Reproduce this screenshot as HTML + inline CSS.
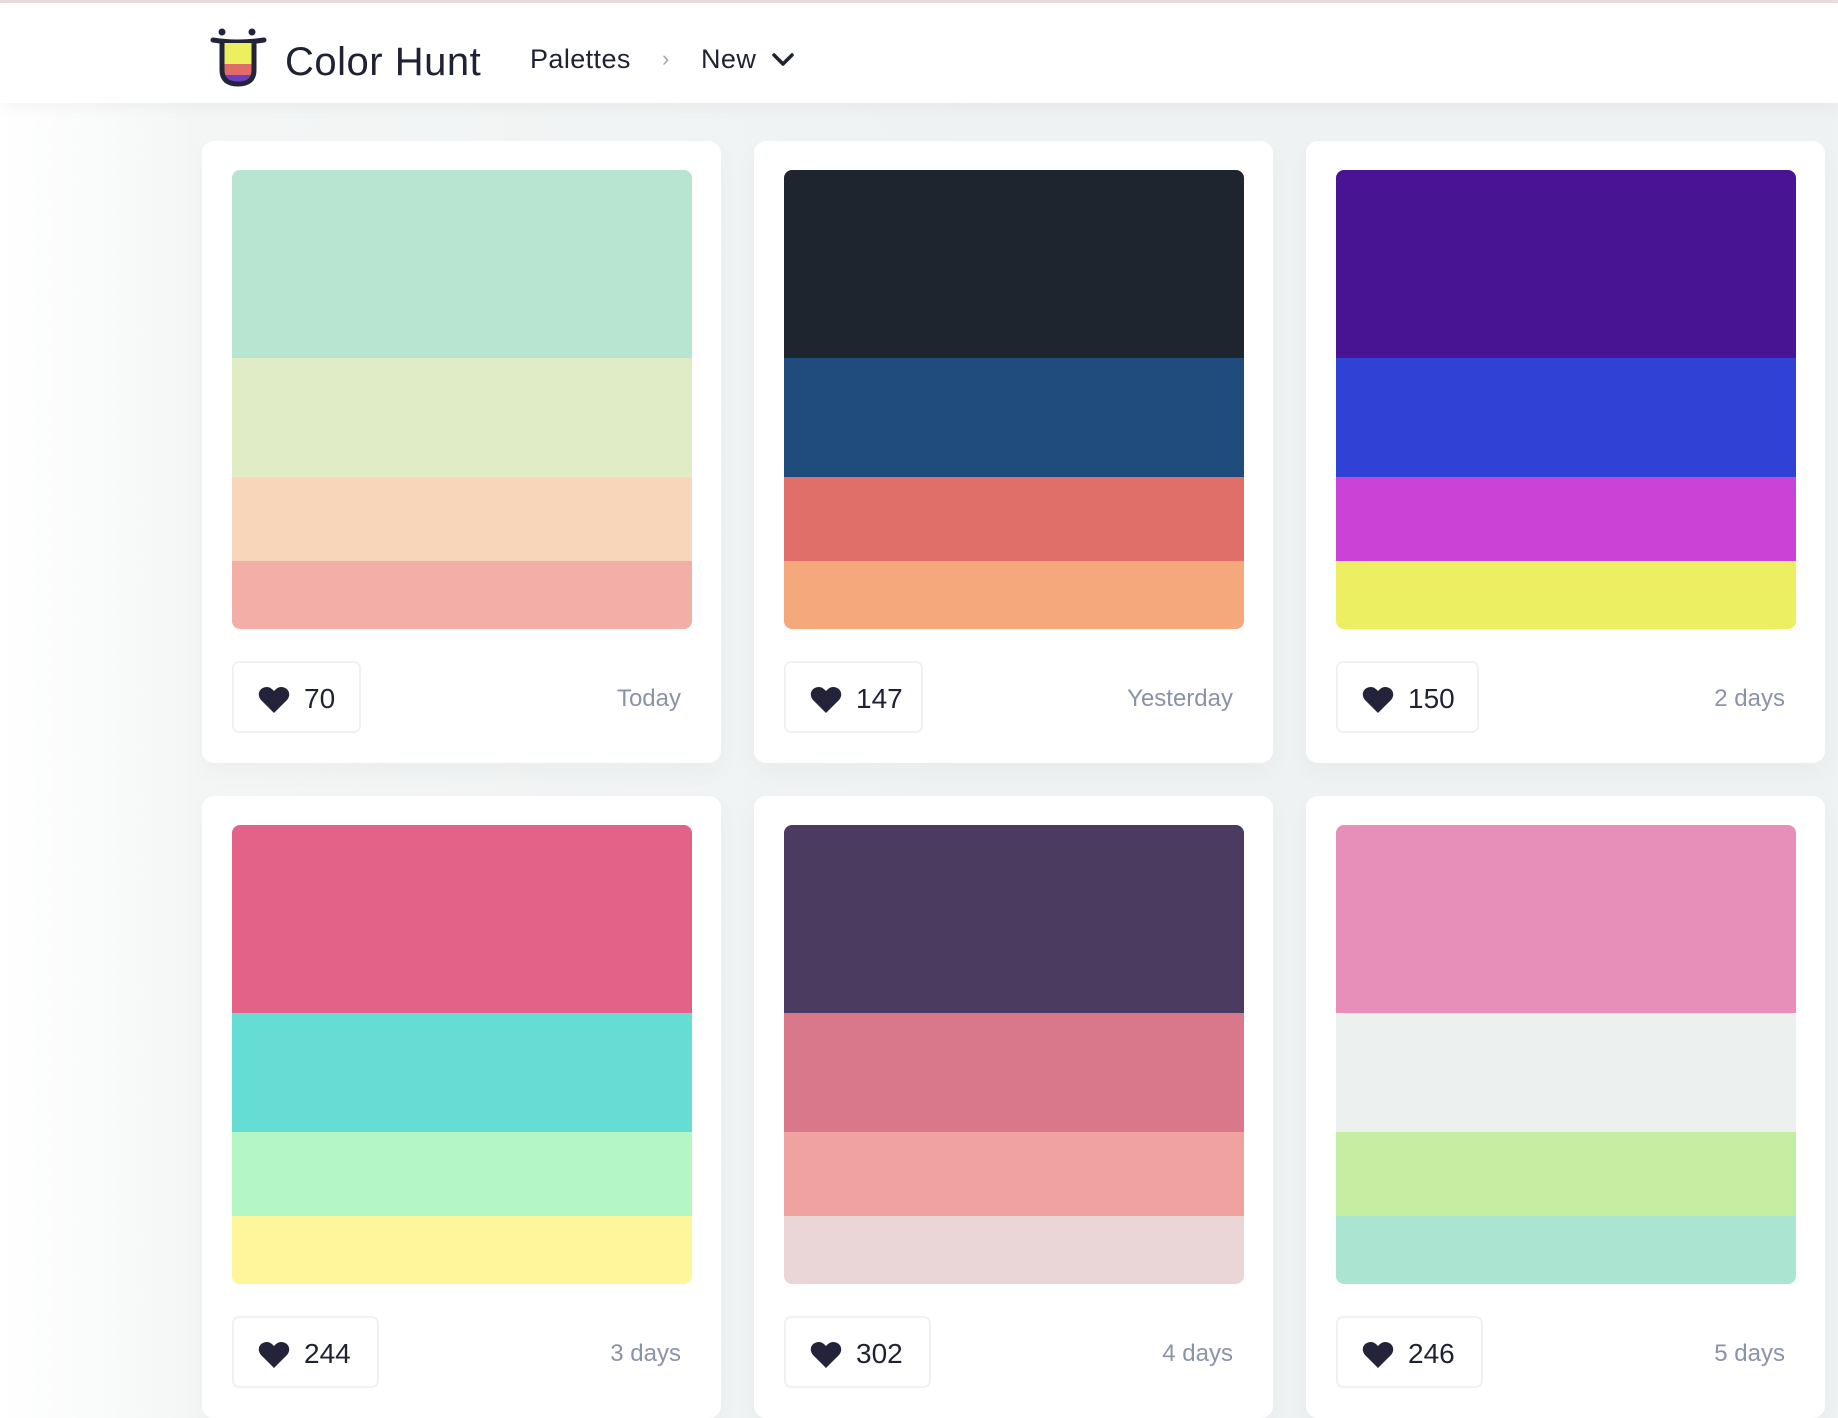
<!DOCTYPE html>
<html><head><meta charset="utf-8"><style>
*{margin:0;padding:0;box-sizing:border-box}
body{width:1838px;height:1382px;overflow:hidden;font-family:"Liberation Sans",sans-serif;background:linear-gradient(90deg,#fff 0,#f4f6f6 200px,#eef2f2 1000px,#eef2f2 100%);position:relative}
.top{position:absolute;left:0;top:0;width:1838px;height:3px;background:#e8dcdc}
.hdr{position:absolute;left:0;top:3px;width:1838px;height:100px;background:#fff;box-shadow:0 6px 14px rgba(0,0,0,0.04)}
.brand{position:absolute;left:285px;top:37px;font-size:40px;color:#1f2233;letter-spacing:0.5px}
.nav{position:absolute;top:41px;font-size:27px;color:#1f2233;letter-spacing:0.4px}
.card{position:absolute;width:519px;background:#fff;border-radius:12px;box-shadow:0 10px 24px rgba(0,0,0,0.03)}
.pal{position:absolute;left:30px;top:29px;width:460px;border-radius:8px;overflow:hidden}
.pal div{width:100%}
.like{position:absolute;left:30px;width:129px;height:72px;border:2px solid #eef2f2;border-radius:7px;font-size:28px;color:#1f2233}
.like svg{position:absolute;left:24px;top:23px}
.like span{position:absolute;left:70px;top:20px}
.date{position:absolute;right:40px;font-size:24px;color:#8a93a8}
</style></head><body>
<div class="top"></div>
<div class="hdr">
<svg style="position:absolute;left:200px;top:7px" width="80" height="80" viewBox="200 10 80 80">
<circle cx="222" cy="32" r="3.5" fill="#23243a"/><circle cx="252" cy="32" r="3.5" fill="#23243a"/>
<path d="M213 40 Q237 44 264 40" stroke="#23243a" stroke-width="5" fill="none" stroke-linecap="round"/>
<rect x="224" y="43" width="28" height="21" fill="#ecef5f"/>
<rect x="224" y="64" width="28" height="11" fill="#e06c6a"/>
<path d="M224 75 L252 75 Q250 83 238 83 Q226 83 224 75Z" fill="#6b3fbf"/>
<path d="M222 42 L222 70 Q222 84 238 84 Q254 84 254 70 L254 42" stroke="#23243a" stroke-width="5" fill="none"/>
</svg>
<div class="brand">Color Hunt</div>
<div class="nav" style="left:530px">Palettes</div>
<div class="nav" style="left:662px;color:#a0a7b5;font-size:22px;top:43px">›</div>
<div class="nav" style="left:701px">New</div>
<svg style="position:absolute;left:771px;top:49px" width="24" height="16" viewBox="0 0 24 16"><path d="M3 3 L12 12 L21 3" stroke="#1f2233" stroke-width="3.5" fill="none" stroke-linecap="round" stroke-linejoin="round"/></svg>
</div>

<div class="card" style="left:202px;top:141px;height:622px">
<div class="pal"><div style="height:188px;background:#b8e5d1"></div><div style="height:119px;background:#e0ecc5"></div><div style="height:84px;background:#f8d6ba"></div><div style="height:68px;background:#f3aea7"></div></div>
<div class="like" style="top:520px"><svg width="32" height="28" viewBox="0 0 32 28"><path d="M16 27 L3 14 C-2 8 2 1 9 1 C12 1 14 3 16 5 C18 3 20 1 23 1 C30 1 34 8 29 14Z" fill="#23243a"/></svg><span>70</span></div>
<div class="date" style="top:544px">Today</div>
</div>
<div class="card" style="left:754px;top:141px;height:622px">
<div class="pal"><div style="height:188px;background:#1e252f"></div><div style="height:119px;background:#204c7d"></div><div style="height:84px;background:#e06f69"></div><div style="height:68px;background:#f5a87b"></div></div>
<div class="like" style="top:520px;width:139px"><svg width="32" height="28" viewBox="0 0 32 28"><path d="M16 27 L3 14 C-2 8 2 1 9 1 C12 1 14 3 16 5 C18 3 20 1 23 1 C30 1 34 8 29 14Z" fill="#23243a"/></svg><span>147</span></div>
<div class="date" style="top:544px">Yesterday</div>
</div>
<div class="card" style="left:1306px;top:141px;height:622px">
<div class="pal"><div style="height:188px;background:#481493"></div><div style="height:119px;background:#3042d6"></div><div style="height:84px;background:#ca43d6"></div><div style="height:68px;background:#ecef62"></div></div>
<div class="like" style="top:520px;width:143px"><svg width="32" height="28" viewBox="0 0 32 28"><path d="M16 27 L3 14 C-2 8 2 1 9 1 C12 1 14 3 16 5 C18 3 20 1 23 1 C30 1 34 8 29 14Z" fill="#23243a"/></svg><span>150</span></div>
<div class="date" style="top:544px">2 days</div>
</div>

<div class="card" style="left:202px;top:796px;height:622px">
<div class="pal"><div style="height:188px;background:#e26288"></div><div style="height:119px;background:#65ddd5"></div><div style="height:84px;background:#b5f6c5"></div><div style="height:68px;background:#fff59b"></div></div>
<div class="like" style="top:520px;width:147px"><svg width="32" height="28" viewBox="0 0 32 28"><path d="M16 27 L3 14 C-2 8 2 1 9 1 C12 1 14 3 16 5 C18 3 20 1 23 1 C30 1 34 8 29 14Z" fill="#23243a"/></svg><span>244</span></div>
<div class="date" style="top:544px">3 days</div>
</div>
<div class="card" style="left:754px;top:796px;height:622px">
<div class="pal"><div style="height:188px;background:#4b3b60"></div><div style="height:119px;background:#da788b"></div><div style="height:84px;background:#f0a2a1"></div><div style="height:68px;background:#ebd6d7"></div></div>
<div class="like" style="top:520px;width:147px"><svg width="32" height="28" viewBox="0 0 32 28"><path d="M16 27 L3 14 C-2 8 2 1 9 1 C12 1 14 3 16 5 C18 3 20 1 23 1 C30 1 34 8 29 14Z" fill="#23243a"/></svg><span>302</span></div>
<div class="date" style="top:544px">4 days</div>
</div>
<div class="card" style="left:1306px;top:796px;height:622px">
<div class="pal"><div style="height:188px;background:#e78fb8"></div><div style="height:119px;background:#ecf1f0"></div><div style="height:84px;background:#c5eea2"></div><div style="height:68px;background:#abe4d1"></div></div>
<div class="like" style="top:520px;width:147px"><svg width="32" height="28" viewBox="0 0 32 28"><path d="M16 27 L3 14 C-2 8 2 1 9 1 C12 1 14 3 16 5 C18 3 20 1 23 1 C30 1 34 8 29 14Z" fill="#23243a"/></svg><span>246</span></div>
<div class="date" style="top:544px">5 days</div>
</div>
</body></html>
